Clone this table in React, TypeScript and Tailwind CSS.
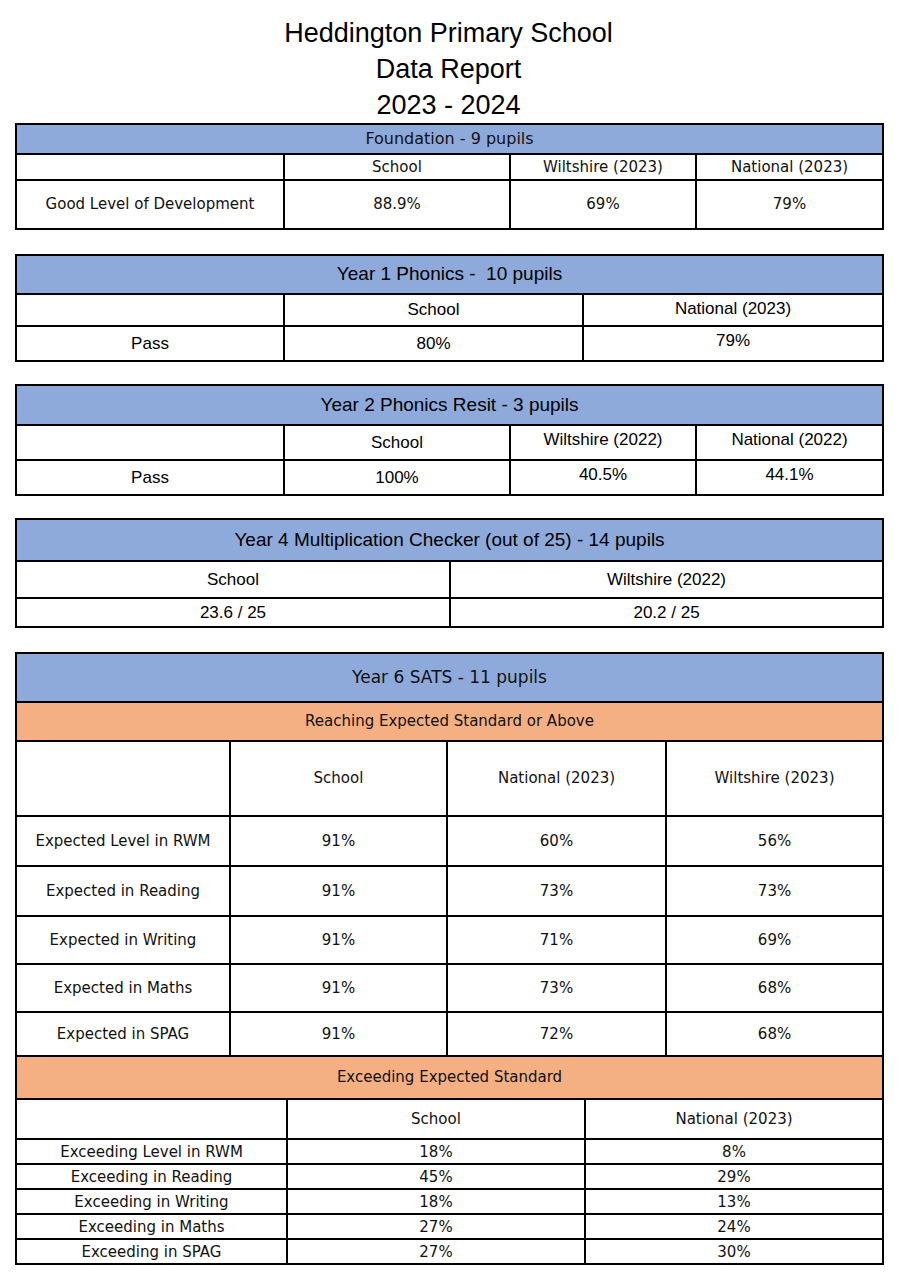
import React from 'react'

const cell = 'border-2 border-black text-center align-middle p-0 font-normal'
const comic = "font-['DejaVu_Sans',sans-serif] text-[15px] text-[#111]"
const narrow = "font-['Liberation_Sans',sans-serif] text-[17px] text-black"

const App: React.FC = () => {
  return (
    <div className="w-[900px] min-h-[1279px] bg-white pb-4">
      <div className="ml-[15px] w-[867px]">
        {/* title */}
        <div className="pt-[15px] text-center font-['Liberation_Sans',sans-serif] text-[27px] leading-[36px] text-black">
          <div>Heddington Primary School</div>
          <div>Data Report</div>
          <div>2023 - 2024</div>
        </div>

        {/* foundation */}
        <table className={`w-full table-fixed border-collapse ${comic}`}>
          <colgroup>
            <col className="w-[268px]" />
            <col className="w-[226px]" />
            <col className="w-[186px]" />
            <col className="w-[187px]" />
          </colgroup>
          <tbody>
            <tr className="h-[30px] bg-[#8eaadb]">
              <td colSpan={4} className={`${cell} text-[16px]`}>Foundation - 9 pupils</td>
            </tr>
            <tr className="h-[26px]">
              <td className={cell}></td>
              <td className={cell}>School</td>
              <td className={cell}>Wiltshire (2023)</td>
              <td className={cell}>National (2023)</td>
            </tr>
            <tr className="h-[49px]">
              <td className={cell}>Good Level of Development</td>
              <td className={cell}>88.9%</td>
              <td className={cell}>69%</td>
              <td className={cell}>79%</td>
            </tr>
          </tbody>
        </table>

        {/* year 1 phonics */}
        <table className={`mt-[24px] w-full table-fixed border-collapse ${narrow}`}>
          <colgroup>
            <col className="w-[268px]" />
            <col className="w-[299px]" />
            <col className="w-[300px]" />
          </colgroup>
          <tbody>
            <tr className="h-[39px] bg-[#8eaadb]">
              <td colSpan={3} className={`${cell} text-[19px]`}>Year 1 Phonics -&nbsp; 10 pupils</td>
            </tr>
            <tr className="h-[32px]">
              <td className={cell}></td>
              <td className={cell}>School</td>
              <td className={`${cell} align-top pt-[1px]`}>National (2023)</td>
            </tr>
            <tr className="h-[35px]">
              <td className={cell}>Pass</td>
              <td className={cell}>80%</td>
              <td className={`${cell} align-top pt-[1px]`}>79%</td>
            </tr>
          </tbody>
        </table>

        {/* year 2 phonics resit */}
        <table className={`mt-[22px] w-full table-fixed border-collapse ${narrow}`}>
          <colgroup>
            <col className="w-[268px]" />
            <col className="w-[226px]" />
            <col className="w-[186px]" />
            <col className="w-[187px]" />
          </colgroup>
          <tbody>
            <tr className="h-[40px] bg-[#8eaadb]">
              <td colSpan={4} className={`${cell} text-[19px]`}>Year 2 Phonics Resit - 3 pupils</td>
            </tr>
            <tr className="h-[35px]">
              <td className={cell}></td>
              <td className={cell}>School</td>
              <td className={`${cell} align-top pt-[1px]`}>Wiltshire (2022)</td>
              <td className={`${cell} align-top pt-[1px]`}>National (2022)</td>
            </tr>
            <tr className="h-[35px]">
              <td className={cell}>Pass</td>
              <td className={cell}>100%</td>
              <td className={`${cell} align-top pt-[1px]`}>40.5%</td>
              <td className={`${cell} align-top pt-[1px]`}>44.1%</td>
            </tr>
          </tbody>
        </table>

        {/* year 4 multiplication */}
        <table className={`mt-[22px] w-full table-fixed border-collapse ${narrow}`}>
          <colgroup>
            <col className="w-[434px]" />
            <col className="w-[433px]" />
          </colgroup>
          <tbody>
            <tr className="h-[42px] bg-[#8eaadb]">
              <td colSpan={2} className={`${cell} text-[19px]`}>
                Year 4 Multiplication Checker (out of 25) - 14 pupils
              </td>
            </tr>
            <tr className="h-[37px]">
              <td className={cell}>School</td>
              <td className={cell}>Wiltshire (2022)</td>
            </tr>
            <tr className="h-[29px]">
              <td className={cell}>23.6 / 25</td>
              <td className={cell}>20.2 / 25</td>
            </tr>
          </tbody>
        </table>

        {/* year 6 sats */}
        <table className={`mt-[24px] w-full table-fixed border-collapse ${comic}`}>
          <colgroup>
            <col className="w-[214px]" />
            <col className="w-[217px]" />
            <col className="w-[219px]" />
            <col className="w-[217px]" />
          </colgroup>
          <tbody>
            <tr className="h-[49px] bg-[#8eaadb]">
              <td colSpan={4} className={`${cell} text-[17px]`}>Year 6 SATS - 11 pupils</td>
            </tr>
            <tr className="h-[39px] bg-[#f4b083]">
              <td colSpan={4} className={cell}>Reaching Expected Standard or Above</td>
            </tr>
            <tr className="h-[75px]">
              <td className={cell}></td>
              <td className={cell}>School</td>
              <td className={cell}>National (2023)</td>
              <td className={cell}>Wiltshire (2023)</td>
            </tr>
            {[
              ['Expected Level in RWM', '91%', '60%', '56%', 'h-[50px]'],
              ['Expected in Reading', '91%', '73%', '73%', 'h-[50px]'],
              ['Expected in Writing', '91%', '71%', '69%', 'h-[48px]'],
              ['Expected in Maths', '91%', '73%', '68%', 'h-[48px]'],
              ['Expected in SPAG', '91%', '72%', '68%', 'h-[44px]'],
            ].map((r) => (
              <tr key={r[0]} className={r[4]}>
                <td className={cell}>{r[0]}</td>
                <td className={cell}>{r[1]}</td>
                <td className={cell}>{r[2]}</td>
                <td className={cell}>{r[3]}</td>
              </tr>
            ))}
            <tr className="h-[43px] bg-[#f4b083]">
              <td colSpan={4} className={cell}>Exceeding Expected Standard</td>
            </tr>
          </tbody>
        </table>
        <table className={`w-full table-fixed border-collapse ${comic}`}>
          <colgroup>
            <col className="w-[271px]" />
            <col className="w-[298px]" />
            <col className="w-[298px]" />
          </colgroup>
          <tbody>
            <tr className="h-[39px]">
              <td className={`${cell} border-t-0`}></td>
              <td className={`${cell} border-t-0`}>School</td>
              <td className={`${cell} border-t-0`}>National (2023)</td>
            </tr>
            {[
              ['Exceeding Level in RWM', '18%', '8%'],
              ['Exceeding in Reading', '45%', '29%'],
              ['Exceeding in Writing', '18%', '13%'],
              ['Exceeding in Maths', '27%', '24%'],
              ['Exceeding in SPAG', '27%', '30%'],
            ].map((r) => (
              <tr key={r[0]} className="h-[25px]">
                <td className={`${cell} leading-[20px]`}>{r[0]}</td>
                <td className={`${cell} leading-[20px]`}>{r[1]}</td>
                <td className={`${cell} leading-[20px]`}>{r[2]}</td>
              </tr>
            ))}
          </tbody>
        </table>
      </div>
    </div>
  )
}

export default App
